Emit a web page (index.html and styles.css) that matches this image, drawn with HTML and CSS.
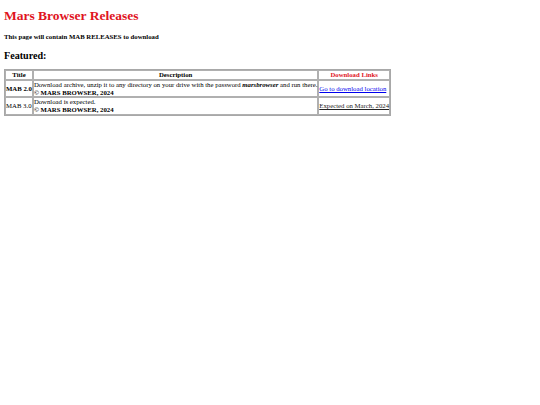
FILE: index.html
```html
<!DOCTYPE html>
<html>
<head>
<meta charset="utf-8">
<title>Mars Browser Releases</title>
<link rel="stylesheet" href="styles.css">
</head>
<body>
<h1 class="title">Mars Browser Releases</h1>
<h4 class="intro">This page will contain MAB RELEASES to download</h4>
<h2 class="featured">Featured:</h2>
<table class="releases">
  <tr>
    <th>Title</th>
    <th>Description</th>
    <th class="dl-head">Download Links</th>
  </tr>
  <tr>
    <th>MAB 2.0</th>
    <td>Download archive, unzip it to any directory on your drive with the password <b><i>marsbrowser</i></b> and run there.<br><b>&copy; MARS BROWSER, 2024</b></td>
    <td><a href="#" class="dl-link">Go to download location</a></td>
  </tr>
  <tr>
    <td>MAB 3.0</td>
    <td>Download is expected.<br><b>&copy; MARS BROWSER, 2024</b></td>
    <td><span class="soon">Expected on March, 2024</span></td>
  </tr>
</table>
</body>
</html>
```
FILE: styles.css
```css
body {
  margin: 0;
  padding: 0 4px;
  font-family: "Liberation Serif", "Times New Roman", serif;
  color: #000;
  background: #fff;
}
.title {
  margin: 8px 0 0;
  font-size: 13.5px;
  line-height: 15px;
  font-weight: bold;
  color: #e0141e;
}
.intro {
  margin: 9.7px 0 0;
  font-size: 6.75px;
  line-height: 8px;
  font-weight: bold;
}
.featured {
  margin: 9.1px 0 0;
  font-size: 10.1px;
  line-height: 11.6px;
  font-weight: bold;
}
.releases {
  margin-top: 7.6px;
  border: 1px solid #a8a8a8;
  border-spacing: 0.5px;
  font-size: 6.75px;
  line-height: 7.8px;
}
.releases th,
.releases td {
  border: 1px solid #b0b0b0;
  padding: 0;
}
.releases th {
  font-weight: bold;
}
.dl-head {
  color: #e0141e;
}
.dl-link {
  color: #0000ee;
}
.soon {
  color: #222;
  text-decoration: underline;
}
```
